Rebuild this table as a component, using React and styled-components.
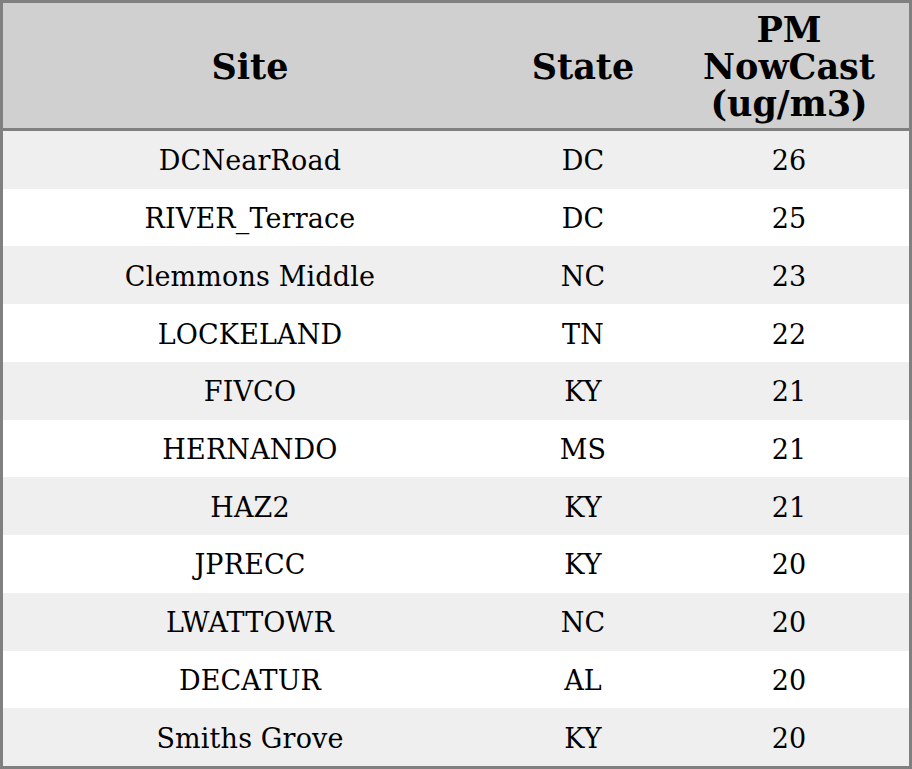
import React from 'react';
import styled, { createGlobalStyle } from 'styled-components';

const rows = [
  ['DCNearRoad', 'DC', 26],
  ['RIVER_Terrace', 'DC', 25],
  ['Clemmons Middle', 'NC', 23],
  ['LOCKELAND', 'TN', 22],
  ['FIVCO', 'KY', 21],
  ['HERNANDO', 'MS', 21],
  ['HAZ2', 'KY', 21],
  ['JPRECC', 'KY', 20],
  ['LWATTOWR', 'NC', 20],
  ['DECATUR', 'AL', 20],
  ['Smiths Grove', 'KY', 20],
];

const GlobalStyle = createGlobalStyle`
  html, body {
    margin: 0;
    padding: 0;
    background: #ffffff;
  }
`;

const Table = styled.div`
  width: 912px;
  height: 769px;
  box-sizing: border-box;
  border: 3px solid #808080;
  display: grid;
  grid-template-columns: 494px 172px 240px;
  grid-template-rows: 128px repeat(11, 1fr);
  font-family: 'DejaVu Serif', serif;
  color: #000;
`;

const Head = styled.div`
  background: #d0d0d0;
  border-bottom: 3px solid #808080;
  box-sizing: border-box;
  display: flex;
  align-items: center;
  justify-content: center;
  text-align: center;
  font-weight: bold;
  font-size: 35px;
  line-height: 37px;
  padding-top: 1px;
`;

const Cell = styled.div`
  background: ${(p) => (p.$odd ? '#ffffff' : '#efefef')};
  display: flex;
  align-items: center;
  justify-content: center;
  font-size: 27px;
  letter-spacing: 0.15px;
  padding-top: 2px;
`;

const Row = styled.div`
  display: contents;
`;

export default function App() {
  return (
    <>
      <GlobalStyle />
      <Table>
        <Row>
          <Head>Site</Head>
          <Head>State</Head>
          <Head>
            PM
            <br />
            NowCast
            <br />
            (ug/m3)
          </Head>
        </Row>
        {rows.map(([site, state, pm], i) => (
          <Row key={site}>
            <Cell $odd={i % 2 === 1}>{site}</Cell>
            <Cell $odd={i % 2 === 1}>{state}</Cell>
            <Cell $odd={i % 2 === 1}>{pm}</Cell>
          </Row>
        ))}
      </Table>
    </>
  );
}
